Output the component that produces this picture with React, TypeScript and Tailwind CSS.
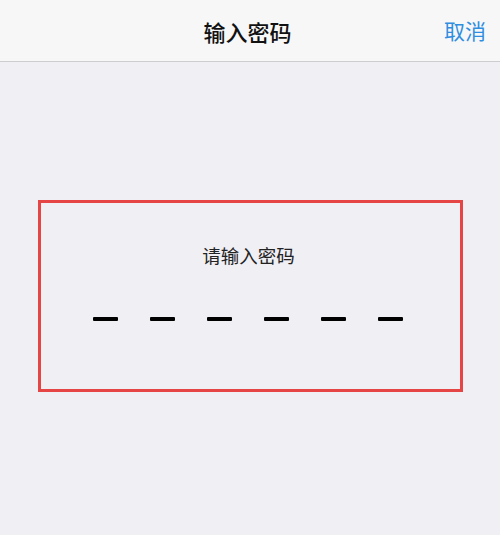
import React from 'react'

const slots = [0, 1, 2, 3, 4, 5]

export default function App() {
  return (
    <div
      className="w-[500px] h-[535px] bg-[#efeff4] flex flex-col"
      style={{ fontFamily: '"Noto Sans CJK SC", "Noto Sans", sans-serif' }}
    >
      {/* nav bar */}
      <div className="h-[62px] shrink-0 bg-[#f7f7f8] border-b border-[#cdcdd0] flex items-center relative">
        <div className="flex-1 text-center text-[22px] font-medium text-[#111] leading-none pr-[5px]">输入密码</div>
        <button className="absolute right-[14px] top-[20px] text-[21px] leading-none text-[#2f8ee0]">取消</button>
      </div>

      {/* password box */}
      <div className="mt-[138px] ml-[38px] mr-[37px] h-[192px] border-[3px] border-[#e64545] flex flex-col items-center">
        <div className="mt-[39px] text-[18.5px] leading-[26px] text-[#222] pr-[4px]">请输入密码</div>
        <div className="mt-[49px] flex gap-[32px] -ml-[6px]">
          {slots.map((i) => (
            <div key={i} className="w-[25px] h-[4px] bg-black rounded-[1px]" />
          ))}
        </div>
      </div>
    </div>
  )
}
